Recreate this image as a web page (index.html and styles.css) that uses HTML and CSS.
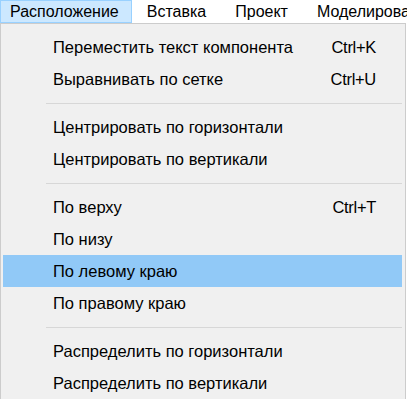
FILE: index.html
```html
<!DOCTYPE html>
<html lang="ru">
<head>
  <meta charset="UTF-8">
  <title>Расположение</title>
  <link rel="stylesheet" href="styles.css">
</head>
<body>
  <div class="menubar">
    <div class="top-item open">Расположение</div>
    <div class="top-item">Вставка</div>
    <div class="top-item">Проект</div>
    <div class="top-item">Моделирование</div>
  </div>
  <div class="dropdown">
    <div class="item"><span class="label">Переместить текст компонента</span><span class="shortcut">Ctrl+K</span></div>
    <div class="item"><span class="label">Выравнивать по сетке</span><span class="shortcut">Ctrl+U</span></div>
    <div class="sep"></div>
    <div class="item"><span class="label">Центрировать по горизонтали</span></div>
    <div class="item"><span class="label">Центрировать по вертикали</span></div>
    <div class="sep"></div>
    <div class="item"><span class="label">По верху</span><span class="shortcut">Ctrl+T</span></div>
    <div class="item"><span class="label">По низу</span></div>
    <div class="item active"><span class="label">По левому краю</span></div>
    <div class="item"><span class="label">По правому краю</span></div>
    <div class="sep"></div>
    <div class="item"><span class="label">Распределить по горизонтали</span></div>
    <div class="item"><span class="label">Распределить по вертикали</span></div>
  </div>
</body>
</html>
```

FILE: styles.css
```css
body {
  margin: 0;
  background-color: #ffffff;
  font-family: 'Liberation Sans', Arial, sans-serif;
  font-size: 16px;
  color: #000000;
  overflow: hidden;
  width: 407px;
}

.menubar {
  display: flex;
  height: 23px;
  background-color: #ffffff;
  white-space: nowrap;
  overflow: hidden;
}

.top-item {
  padding: 0 13px 0 14px;
  line-height: 21px;
  border: 1px solid transparent;
}

.top-item.open {
  background-color: #cce8ff;
  border-color: #99d1ff;
  padding: 0 12px 0 9px;
}

.dropdown {
  width: 406px;
  background-color: #f0f0f0;
  border: 1px solid #cccccc;
  border-bottom: none;
  padding: 7px 3px 0 2px;
  box-sizing: border-box;
  font-size: 16.5px;
}

.item {
  display: flex;
  align-items: center;
  height: 32px;
  padding: 0 26px 0 50px;
  white-space: nowrap;
}

.item .label {
  flex: 1;
}

.item .shortcut {
  letter-spacing: -0.3px;
}

.item.active {
  background-color: #91c9f7;
}

.sep {
  height: 1px;
  margin: 8px 0 7px 43px;
  background-color: #d7d7d7;
}
```
